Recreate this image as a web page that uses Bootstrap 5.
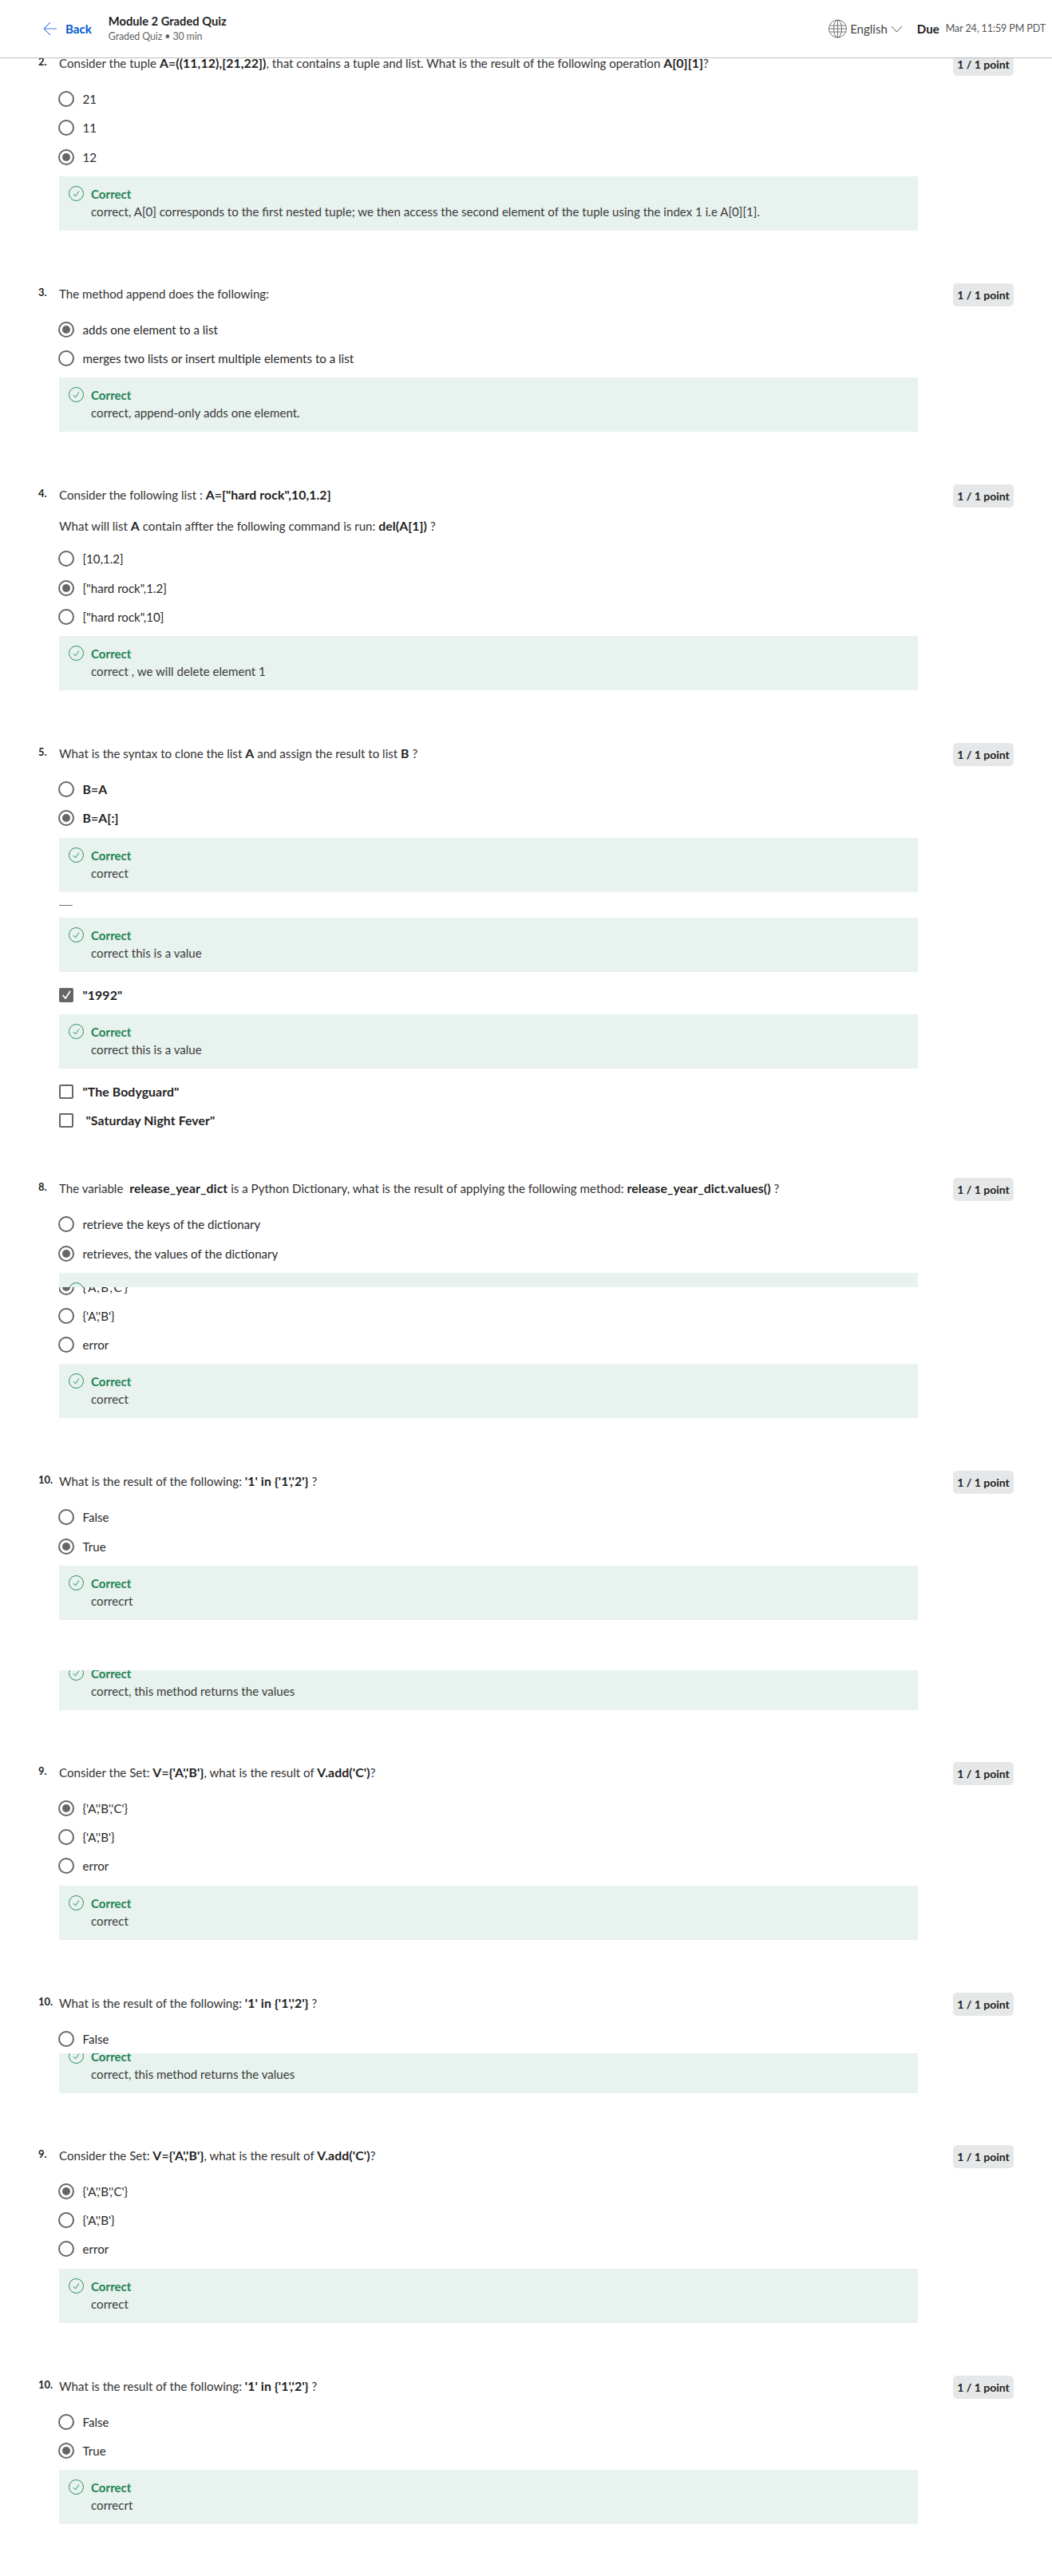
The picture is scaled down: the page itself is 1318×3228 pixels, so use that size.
<!DOCTYPE html>
<html lang="en">
<head>
  <meta charset="UTF-8" />
  <meta name="viewport" content="width=device-width, initial-scale=1" />
  <title>Module 2 Graded Quiz</title>
  <link href="https://cdn.jsdelivr.net/npm/bootstrap@5.3.0/dist/css/bootstrap.min.css" rel="stylesheet" />
  <style>
    body { font-family: "Lato", "Liberation Sans", sans-serif; font-size: 15.1px; line-height: 20px; color: #333; background: #fff; height: 3228px; overflow: hidden; }
    .quiz-top { height: 73px; background: #fff; border-bottom: 1px solid #bdbdbd; padding: 0 8px 0 54px; z-index: 10; }
    .back-link { color: #0056d2; font-weight: 700; text-decoration: none; margin-right: 21px; }
    .back-link svg { margin-right: 11px; }
    .quiz-title { font-weight: 700; font-size: 14.700px; color: #1f1f1f; line-height: 20px; }
    .quiz-sub { font-size: 12.400px; letter-spacing: -.1px; color: #636363; line-height: 20px; }
    .lang-pick { color: #444; font-size: 15px; margin-right: 18px; }
    .due-label { font-weight: 700; color: #1f1f1f; margin-right: 8px; }
    .due-date { font-size: 12.500px; letter-spacing: -.1px; color: #555; }
    .quiz-body { margin-top: -4px; padding: 0 48px 0 48px; }
    .q-block { padding-bottom: 69px; }
    .q-head { height: 20px; }
    .q-num { width: 26px; flex: none; font-weight: 700; font-size: 13px; color: #1f1f1f; line-height: 16px; }
    .q-text { flex: 1 1 auto; }
    .q-text b, .q-extra b, .opt-row b { color: #1f1f1f; font-size: 15.800px; letter-spacing: .1px; }
    .q-extra { padding-left: 26px; margin-top: 19px; }
    .q-extra + .opt-list { margin-top: 13px; }
    .pts-tag { background: #e5e7e8; color: #1f1f1f; font-weight: 700; font-size: 14px; border-radius: 5px; width: 76px; height: 29px; line-height: 29px; text-align: center; flex: none; margin-top: -3px; }
    .opt-list { margin-top: 17px; padding-left: 26px; width: 1102px; }
    .opt-row { height: 36.250px; display: flex; align-items: center; color: #2a2a2a; }
    .opt-radio { width: 20px; height: 20px; border: 2px solid #666; border-radius: 50%; margin: 0 10.500px 0 -1px; flex: none; position: relative; background: #fff; }
    .opt-radio.on::after { content: ""; position: absolute; inset: 3px; border-radius: 50%; background: #666; }
    .opt-check { width: 18px; height: 18px; border: 2px solid #666; border-radius: 2px; margin-right: 11.500px; flex: none; background: #fff; }
    .opt-check.on { background: #666; display: flex; align-items: center; justify-content: center; }
    .fb-box { background: #e8f2ee; height: 68px; padding: 12px 0 0 12px; display: flex; gap: 9px; }
    .fb-box svg { flex: none; }
    .fb-title { color: #1f8354; font-weight: 700; line-height: 21px; }
    .fb-text { line-height: 22px; color: #3c3c3c; }
    .mt-opt { margin-top: 6px; }
    .cut-top { height: 18px; overflow: hidden; }
    .cut-end { overflow: hidden; display: flex; flex-direction: column; justify-content: flex-end; }
    .cut-end.h18 { height: 18px; }
    .cut-slice { height: 50px; margin-left: 26px; width: 1076px; }
    .short-dash { width: 17px; height: 1px; background: #777; margin: 16px 0 15px; }
    .after-fb { margin-top: 11px; }
    .mt-q8 { margin-top: 57px; }
    .gap-cut { margin-top: 63px; }
    .after-cut { margin-top: 68px; }
    .no-shrink { flex: none; }
  </style>
</head>
<body>
  <svg width="0" height="0" class="d-block position-absolute">
    <symbol id="okIcon" viewBox="0 0 19 19">
      <circle cx="9.500" cy="9.500" r="9" fill="none" stroke="#1f8354" stroke-width=".9" />
      <path d="M6 10l2.500 3 4.500-6.500" fill="none" stroke="#1f8354" stroke-width=".9" />
    </symbol>
  </svg>

  <header class="quiz-top sticky-top d-flex align-items-center justify-content-between">
    <div class="d-flex align-items-center">
      <a class="back-link d-flex align-items-center" href="#">
        <svg width="17" height="18" viewBox="0 0 17 18"><path d="M2 9h15" fill="none" stroke="#7aa6ea" stroke-width="1.500" /><path d="M9 1L1 9l8 8" fill="none" stroke="#0056d2" stroke-width="1" /></svg>
        Back
      </a>
      <div>
        <div class="quiz-title">Module 2 Graded Quiz</div>
        <div class="quiz-sub">Graded Quiz • 30 min</div>
      </div>
    </div>
    <div class="d-flex align-items-center">
      <div class="lang-pick d-flex align-items-center gap-1">
        <svg width="23" height="24" viewBox="0 0 23 24" fill="none" stroke="#666" stroke-width=".9"><circle cx="11.500" cy="12" r="11" /><ellipse cx="11.500" cy="12" rx="5" ry="11" /><path d="M1.500 8h20M1.500 16h20M.5 12h22M11.500 1v22" /></svg>
        English
        <svg width="15" height="9" viewBox="0 0 15 9"><path d="M1 1l6.500 7L14 1" fill="none" stroke="#555" stroke-width="1" /></svg>
      </div>
      <span class="due-label">Due</span><span class="due-date">Mar 24, 11:59 PM PDT</span>
    </div>
  </header>

  <main class="quiz-body">
    <section class="q-block">
      <div class="q-head d-flex"><div class="q-num">2.</div><div class="q-text">Consider the tuple <b>A=((11,12),[21,22])</b>, that contains a tuple and list. What is the result of the following operation <b>A[0][1]</b>?</div><div class="pts-tag">1 / 1 point</div></div>
      <div class="opt-list">
        <div class="opt-row"><span class="opt-radio"></span>21</div>
        <div class="opt-row"><span class="opt-radio"></span>11</div>
        <div class="opt-row"><span class="opt-radio on"></span>12</div>
        <div class="fb-box mt-opt"><svg width="19" height="19"><use href="#okIcon" /></svg><div><div class="fb-title">Correct</div><div class="fb-text">correct, A[0] corresponds to the first nested tuple; we then access the second element of the tuple using the index 1 i.e A[0][1].</div></div></div>
      </div>
    </section>

    <section class="q-block">
      <div class="q-head d-flex"><div class="q-num">3.</div><div class="q-text">The method append does the following:</div><div class="pts-tag">1 / 1 point</div></div>
      <div class="opt-list">
        <div class="opt-row"><span class="opt-radio on"></span>adds one element to a list</div>
        <div class="opt-row"><span class="opt-radio"></span>merges two lists or insert multiple elements to a list</div>
        <div class="fb-box mt-opt"><svg width="19" height="19"><use href="#okIcon" /></svg><div><div class="fb-title">Correct</div><div class="fb-text">correct, append-only adds one element.</div></div></div>
      </div>
    </section>

    <section class="q-block">
      <div class="q-head d-flex"><div class="q-num">4.</div><div class="q-text">Consider the following list : <b>A=["hard rock",10,1.2]</b></div><div class="pts-tag">1 / 1 point</div></div>
      <div class="q-extra">What will list <b>A</b> contain affter the following command is run: <b>del(A[1])</b> ?</div>
      <div class="opt-list">
        <div class="opt-row"><span class="opt-radio"></span>[10,1.2]</div>
        <div class="opt-row"><span class="opt-radio on"></span>["hard rock",1.2]</div>
        <div class="opt-row"><span class="opt-radio"></span>["hard rock",10]</div>
        <div class="fb-box mt-opt"><svg width="19" height="19"><use href="#okIcon" /></svg><div><div class="fb-title">Correct</div><div class="fb-text">correct , we will delete element 1</div></div></div>
      </div>
    </section>

    <section class="q-block pb-0">
      <div class="q-head d-flex"><div class="q-num">5.</div><div class="q-text">What is the syntax to clone the list <b>A</b> and assign the result to list <b>B</b> ?</div><div class="pts-tag">1 / 1 point</div></div>
      <div class="opt-list">
        <div class="opt-row"><span class="opt-radio"></span><b>B=A</b></div>
        <div class="opt-row"><span class="opt-radio on"></span><b>B=A[:]</b></div>
        <div class="fb-box mt-opt"><svg width="19" height="19"><use href="#okIcon" /></svg><div><div class="fb-title">Correct</div><div class="fb-text">correct</div></div></div>
        <div class="short-dash"></div>
        <div class="fb-box"><svg width="19" height="19"><use href="#okIcon" /></svg><div><div class="fb-title">Correct</div><div class="fb-text">correct this is a value</div></div></div>
        <div class="opt-row after-fb"><span class="opt-check on"><svg width="12" height="11" viewBox="0 0 12 11"><path d="M1.500 6l3.500 4 6-9" fill="none" stroke="#fff" stroke-width="1.800" /></svg></span><b>"1992"</b></div>
        <div class="fb-box mt-opt"><svg width="19" height="19"><use href="#okIcon" /></svg><div><div class="fb-title">Correct</div><div class="fb-text">correct this is a value</div></div></div>
        <div class="opt-row after-fb"><span class="opt-check"></span><b>"The Bodyguard"</b></div>
        <div class="opt-row"><span class="opt-check"></span><b>&nbsp;"Saturday Night Fever"</b></div>
      </div>
    </section>

    <section class="q-block mt-q8">
      <div class="q-head d-flex"><div class="q-num">8.</div><div class="q-text">The variable &nbsp;<b>release_year_dict</b> is a Python Dictionary, what is the result of applying the following method: <b>release_year_dict.values()</b> ?</div><div class="pts-tag">1 / 1 point</div></div>
      <div class="opt-list">
        <div class="opt-row"><span class="opt-radio"></span>retrieve the keys of the dictionary</div>
        <div class="opt-row"><span class="opt-radio on"></span>retrieves, the values of the dictionary</div>
        <div class="cut-top mt-opt"><div class="fb-box"><svg width="19" height="19"><use href="#okIcon" /></svg></div></div>
        <div class="cut-end h18"><div class="opt-row no-shrink"><span class="opt-radio on"></span>{'A','B','C'}</div></div>
        <div class="opt-row"><span class="opt-radio"></span>{'A','B'}</div>
        <div class="opt-row"><span class="opt-radio"></span>error</div>
        <div class="fb-box mt-opt"><svg width="19" height="19"><use href="#okIcon" /></svg><div><div class="fb-title">Correct</div><div class="fb-text">correct</div></div></div>
      </div>
    </section>

    <section class="q-block pb-0">
      <div class="q-head d-flex"><div class="q-num">10.</div><div class="q-text">What is the result of the following: <b>'1' in {'1','2'}</b> ?</div><div class="pts-tag">1 / 1 point</div></div>
      <div class="opt-list">
        <div class="opt-row"><span class="opt-radio"></span>False</div>
        <div class="opt-row"><span class="opt-radio on"></span>True</div>
        <div class="fb-box mt-opt"><svg width="19" height="19"><use href="#okIcon" /></svg><div><div class="fb-title">Correct</div><div class="fb-text">correcrt</div></div></div>
      </div>
    </section>

    <div class="cut-end cut-slice gap-cut"><div class="fb-box no-shrink"><svg width="19" height="19"><use href="#okIcon" /></svg><div><div class="fb-title">Correct</div><div class="fb-text">correct, this method returns the values</div></div></div></div>

    <section class="q-block after-cut">
      <div class="q-head d-flex"><div class="q-num">9.</div><div class="q-text">Consider the Set: <b>V={'A','B'}</b>, what is the result of <b>V.add('C')</b>?</div><div class="pts-tag">1 / 1 point</div></div>
      <div class="opt-list">
        <div class="opt-row"><span class="opt-radio on"></span>{'A','B','C'}</div>
        <div class="opt-row"><span class="opt-radio"></span>{'A','B'}</div>
        <div class="opt-row"><span class="opt-radio"></span>error</div>
        <div class="fb-box mt-opt"><svg width="19" height="19"><use href="#okIcon" /></svg><div><div class="fb-title">Correct</div><div class="fb-text">correct</div></div></div>
      </div>
    </section>

    <section>
      <div class="q-head d-flex"><div class="q-num">10.</div><div class="q-text">What is the result of the following: <b>'1' in {'1','2'}</b> ?</div><div class="pts-tag">1 / 1 point</div></div>
      <div class="opt-list">
        <div class="opt-row"><span class="opt-radio"></span>False</div>
      </div>
    </section>

    <div class="cut-end cut-slice"><div class="fb-box no-shrink"><svg width="19" height="19"><use href="#okIcon" /></svg><div><div class="fb-title">Correct</div><div class="fb-text">correct, this method returns the values</div></div></div></div>

    <section class="q-block after-cut">
      <div class="q-head d-flex"><div class="q-num">9.</div><div class="q-text">Consider the Set: <b>V={'A','B'}</b>, what is the result of <b>V.add('C')</b>?</div><div class="pts-tag">1 / 1 point</div></div>
      <div class="opt-list">
        <div class="opt-row"><span class="opt-radio on"></span>{'A','B','C'}</div>
        <div class="opt-row"><span class="opt-radio"></span>{'A','B'}</div>
        <div class="opt-row"><span class="opt-radio"></span>error</div>
        <div class="fb-box mt-opt"><svg width="19" height="19"><use href="#okIcon" /></svg><div><div class="fb-title">Correct</div><div class="fb-text">correct</div></div></div>
      </div>
    </section>

    <section class="q-block">
      <div class="q-head d-flex"><div class="q-num">10.</div><div class="q-text">What is the result of the following: <b>'1' in {'1','2'}</b> ?</div><div class="pts-tag">1 / 1 point</div></div>
      <div class="opt-list">
        <div class="opt-row"><span class="opt-radio"></span>False</div>
        <div class="opt-row"><span class="opt-radio on"></span>True</div>
        <div class="fb-box mt-opt"><svg width="19" height="19"><use href="#okIcon" /></svg><div><div class="fb-title">Correct</div><div class="fb-text">correcrt</div></div></div>
      </div>
    </section>
  </main>
  <script src="https://cdn.jsdelivr.net/npm/bootstrap@5.3.0/dist/js/bootstrap.bundle.min.js"></script>
</body>
</html>
